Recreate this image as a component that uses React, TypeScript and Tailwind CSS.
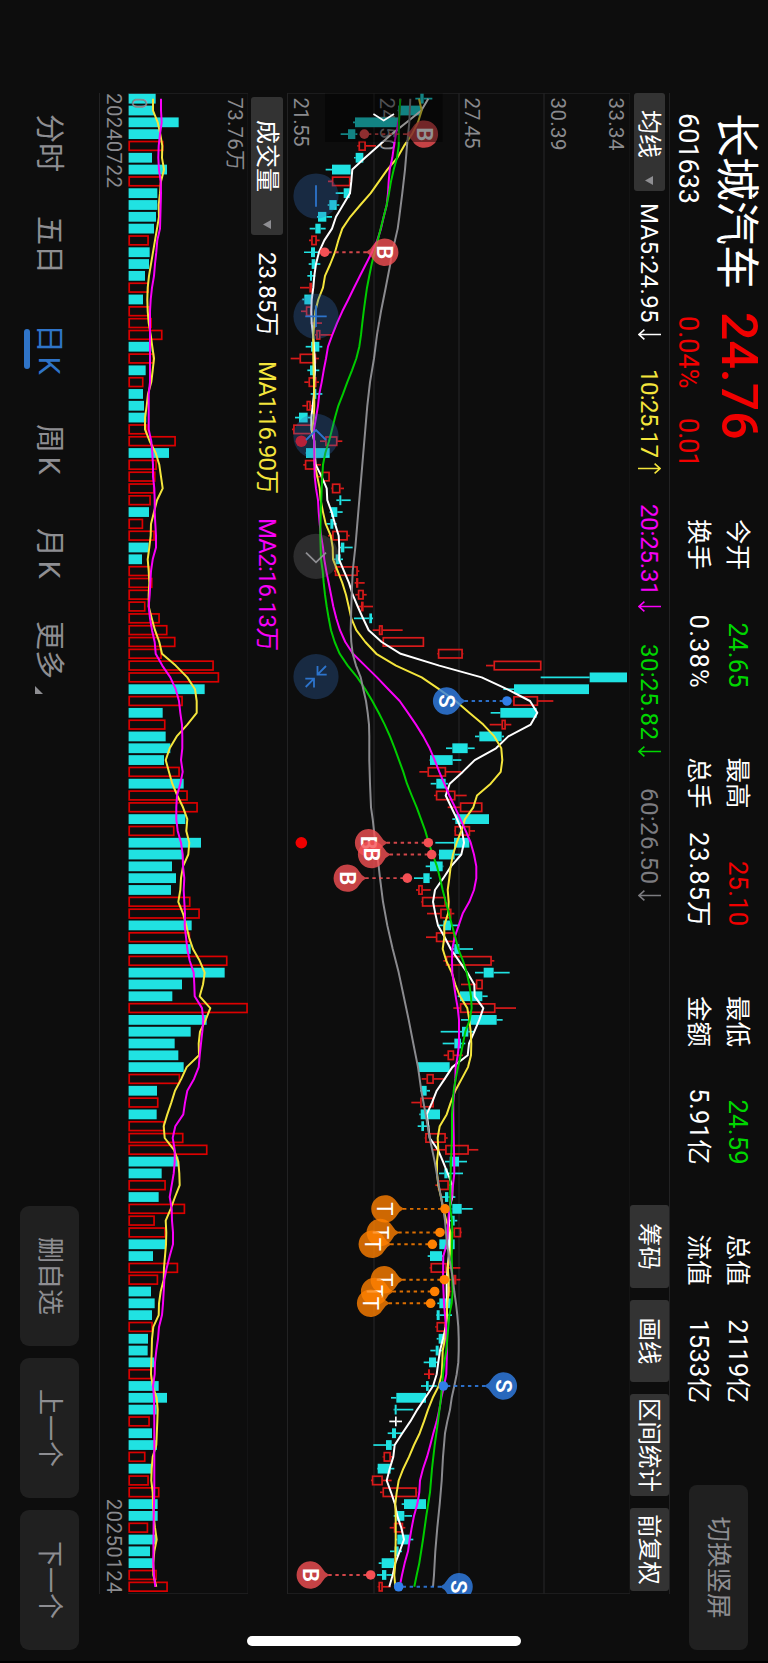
import clsx from "clsx"
import type { ReactNode } from "react"

const CYAN = "#20e2e2"
const RED = "#d81a1a"
const STEP = 11.81

// every plotted level is in thirds of a pixel, measured up from the axis origin
const xAt = (i: number) => 5.7 + i * STEP
const priceY = (v: number) => 350 - v / 3
const volumeY = (v: number) => 248 - v / 3

// kind, low, body bottom, body top, high
const CANDLES = `
c,406,421,431,457 c,353,355,422,422 c,219,225,355,355 c,182,204,226,232 r,232,236,257,288
c,222,227,250,250 c,137,156,212,212 r,144,156,211,211 c,167,191,209,213 c,143,148,170,178
c,111,114,139,156 c,89,106,122,137 r,87,94,110,119 c,72,93,105,115 c,86,95,106,121
c,82,90,96,106 r,60,88,96,96 c,67,73,96,96 r,63,78,94,97 r,92,102,107,126
r,105,109,121,157 c,77,93,118,127 r,32,59,108,117 c,82,90,106,118 r,73,86,109,117
c,92,103,109,127 r,67,80,92,102 c,45,57,83,92 r,36,40,98,98 r,120,136,172,187
c,77,78,149,149 r,70,75,105,123 r,108,124,149,149 r,154,156,181,192 c,169,178,184,212
c,149,153,172,188 c,139,151,160,170 r,144,157,203,209 c,180,183,193,218 c,160,167,182,189
r,162,165,233,238 r,224,228,235,254 r,226,234,251,260 r,234,243,251,279 c,222,268,276,279
r,278,297,308,368 r,306,308,432,432 r,472,474,548,550 r,618,641,784,784 c,782,929,1041,1041
c,670,702,927,927 r,698,700,774,820 c,632,661,770,770 r,629,665,677,694 c,585,598,665,672
c,498,517,563,584 c,449,450,518,544 r,418,443,498,544 c,452,469,497,504 r,462,468,526,560
r,503,540,607,607 c,517,526,627,627 r,522,524,570,585 c,466,522,568,568 c,476,477,524,544
c,437,450,488,490 c,402,430,449,455 r,408,415,428,452 r,424,426,497,497 r,441,481,514,523
c,477,490,513,538 r,438,468,524,524 c,515,523,538,579 r,490,498,635,643 c,585,611,641,689
r,543,588,608,608 c,533,540,607,623 r,520,540,646,708 c,543,570,650,668 c,482,546,565,585
c,488,523,543,556 r,491,503,522,549 c,412,414,509,509 r,425,440,461,497 c,420,424,440,450
r,394,421,461,461 c,418,422,480,480 c,413,424,432,448 r,434,436,497,503 r,459,496,566,595
c,495,509,537,561 c,477,493,503,549 r,466,474,506,510 c,485,495,505,526 c,515,517,545,578
c,508,516,524,532 r,519,521,543,545 c,477,478,524,524 c,443,450,486,490 r,449,452,500,541
r,500,520,529,541 r,498,502,511,514 c,472,478,512,516 c,468,470,479,516 r,466,470,496,500
c,470,476,494,494 c,451,467,476,486 c,431,447,468,476 r,432,444,450,463 c,423,438,446,470
c,333,349,438,438 c,341,344,350,400 w,328,345,350,366 c,323,336,348,368 c,280,318,335,342
r,308,311,332,340 c,291,293,332,343 r,273,276,308,335 r,300,308,410,412 c,365,372,438,438
c,341,350,373,396 r,329,342,369,376 c,346,352,389,400 c,330,344,356,366 c,296,305,342,344
c,291,306,319,336 r,293,296,308,332`

const VOLUMES = `
c467 c462 c536 c478 r490 c456 c501 r483 c472 c472 c468 c462 r446 c449 c447 c435 r446 c429 r450 r455
r487 c454 r462 c437 r430 c429 c432 c439 r442 r527 c507 r470 r466 r463 r452 c447 r429 r464 c446 c426
r450 r457 r448 r436 r479 r502 r526 r485 r641 r657 c614 r548 c488 r496 c497 c511 c492 r539 c551 r563
r593 c556 r523 c603 c548 c516 c528 c513 r571 r599 c575 r570 c572 r682 c674 c546 c517 r743 c620 c572
c524 c535 c551 r540 c471 r475 c470 r493 r550 r622 c535 c485 r497 c476 r555 r464 r497 c498 c459 r534
r474 c453 c464 c456 r458 c444 c443 c462 r455 c476 c501 c470 r449 c456 c471 r436 c454 r446 r478 c473
c473 r444 c468 c450 c458 r470 r503`

// index,level pairs
const MA60 =
  "0,391 2,388 4,381 6,375 8,367 10,358 11,353 12,345 13,336 14,331 16,317 18,303 20,291 22,282 24,270 26,262 28,256 30,250 32,244 34,238 36,232 38,226 40,218 42,215 44,213 45,212 46,214 47,218 48,228 49,242 50,250 51,258 52,263 53,267 54,268 56,268 58,270 60,273 61,278 62,282 63,286 64,291 65,296 66,300 68,309 70,322 72,338 74,356 76,371 78,386 80,400 82,414 84,424 86,437 88,449 90,464 92,476 94,490 95,495 97,501 98,507 99,513 100,519 101,523 102,528 103,532 104,535 105,536 106,536 107,535 108,530 109,523 110,515 111,510 112,502 113,495 115,489 117,485 119,479 121,472 123,466 125,462 126,459"
const MA5 =
  "0,445 1,424 2,380 3,335 4,295 5,255 6,217 7,214 8,210 9,189 10,168 11,156 12,133 13,117 14,108 15,103 16,100 17,95 18,94 19,95 20,99 21,102 22,104 23,105 24,103 25,102 26,98 27,94 28,94 29,103 30,104 31,107 32,125 33,140 34,142 35,155 36,165 37,176 38,178 39,177 40,192 41,207 42,218 43,233 44,249 45,266 46,305 47,362 48,478 49,605 50,681 51,750 52,772 53,752 54,685 55,648 56,584 57,548 58,509 59,497 60,514 61,531 62,546 63,552 64,544 65,513 66,490 67,465 68,459 69,466 70,474 71,494 72,512 73,537 74,562 75,583 76,584 77,610 78,598 79,583 80,567 81,563 82,517 83,494 84,470 85,456 86,440 87,445 88,449 89,474 90,489 91,503 92,517 93,517 94,508 95,507 96,508 97,508 98,506 99,503 100,500 101,500 102,501 103,501 104,497 105,489 106,480 107,475 108,470 109,459 110,436 111,412 112,391 113,367 114,344 115,340 116,329 117,320 118,333 119,345 120,352 121,364 122,372 123,359 124,346 125,338 126,328"
const MA10 =
  "0,417 1,425 2,414 3,396 4,372 5,352 6,322 7,297 8,272 9,241 10,211 11,187 12,175 13,165 14,151 15,135 16,129 17,115 18,106 19,103 20,100 22,100 25,103 26,103 27,101 28,97 29,103 31,104 32,112 33,119 34,122 35,129 36,137 37,152 38,158 39,159 40,173 41,187 42,198 43,206 44,214 45,229 46,256 47,289 48,348 49,425 50,477 51,527 52,568 53,610 54,643 55,664 56,667 57,662 58,632 59,591 60,580 61,555 62,544 63,530 64,519 65,512 66,508 67,503 68,506 69,504 70,493 71,493 72,488 73,499 74,515 75,526 76,540 77,562 78,568 79,572 80,574 81,573 82,564 83,545 84,526 85,512 86,500 87,479 88,473 89,475 90,471 91,471 92,475 93,483 94,490 95,499 96,512 97,514 98,509 99,503 100,506 101,506 102,502 103,500 104,498 105,495 106,488 107,487 108,485 109,476 110,458 111,444 112,432 113,419 114,402 115,387 116,370 117,356 118,350 119,346 120,347 122,347 124,346 125,343 126,346"
const MA20 =
  "0,361 1,359 2,355 3,348 4,342 5,337 6,329 7,326 8,324 9,320 10,311 11,303 12,292 13,276 14,258 15,240 16,222 17,205 18,187 19,171 20,157 21,144 22,138 23,131 24,125 25,118 26,114 27,108 28,102 30,103 32,104 33,108 34,114 35,116 36,119 37,123 38,129 39,133 40,139 41,146 42,153 43,160 44,169 45,180 46,196 47,219 48,255 49,291 50,325 51,359 52,384 53,408 54,430 55,449 56,464 57,478 58,493 59,508 60,525 61,541 62,557 63,572 64,582 65,589 66,589 67,582 68,568 69,548 70,536 71,524 72,517 73,516 74,517 75,522 76,527 77,533 78,537 80,537 81,533 82,527 83,526 84,523 85,520 86,520 89,522 91,523 92,519 93,515 94,508 95,505 96,503 97,500 98,490 100,489 102,492 104,498 106,501 108,499 109,492 110,484 111,478 112,470 113,460 114,451 115,441 116,429 117,420 118,418 119,412 120,402 121,395 122,389 123,384 124,374 125,366 126,359"
const MA30 =
  "0,361 2,357 4,356 5,351 6,341 7,333 8,327 9,320 10,311 11,302 12,293 13,284 14,275 15,268 16,261 17,256 18,251 19,247 20,243 21,238 22,229 23,216 24,202 25,189 26,175 27,165 28,156 29,147 30,136 31,129 32,127 33,125 34,124 35,122 37,121 39,123 40,128 41,131 42,135 43,140 44,146 45,153 46,164 47,179 48,203 49,232 50,256 51,277 52,296 53,314 54,330 55,344 56,357 57,370 58,381 59,395 60,410 61,423 62,436 63,446 64,458 65,471 66,480 67,488 68,497 69,507 70,516 71,526 72,535 73,549 74,560 75,568 76,573 77,575 78,569 79,556 80,549 81,542 82,534 83,527 84,521 86,516 88,516 90,513 92,511 94,511 95,516 96,517 98,515 100,517 101,518 102,515 103,508 104,505 106,499 107,493 108,489 109,486 110,483 112,474 114,464 116,456 118,450 120,439 122,429 124,418 125,410 126,403"
const VOL_MA1 =
  "0,459 1,459 2,473 3,481 4,487 5,486 6,492 7,483 8,480 9,476 10,477 11,471 12,465 13,459 14,453 15,447 16,443 17,442 18,443 19,446 20,452 21,457 22,462 23,458 24,454 25,444 26,440 27,435 28,435 29,449 30,467 31,478 32,483 33,488 34,471 35,462 36,453 37,452 38,448 39,443 40,446 41,448 42,446 43,446 44,455 45,465 46,478 47,486 48,527 49,562 50,585 51,590 52,590 53,562 54,530 55,509 56,497 57,507 58,517 59,532 60,549 61,562 62,559 63,568 64,565 65,549 66,543 67,541 68,535 69,549 70,559 71,567 72,579 73,599 74,614 75,609 76,599 77,631 78,617 79,600 80,596 81,597 82,560 83,544 84,525 85,514 86,502 87,491 88,494 89,522 90,535 91,538 92,539 93,525 94,512 95,497 96,499 97,498 98,495 99,492 100,491 101,482 102,477 103,476 104,460 105,456 106,455 107,454 108,453 109,458 110,470 111,473 112,472 114,469 115,458 116,455 117,454 118,458 119,459 120,461 121,465 122,470 123,463 124,460 125,460 126,469"
const VOL_MA2 =
  "0,483 1,483 2,485 3,480 4,476 5,475 6,477 7,482 8,483 11,480 12,472 13,469 14,465 15,462 16,456 17,452 18,450 20,450 24,450 25,446 26,446 28,446 29,454 30,457 31,459 32,459 33,463 34,464 35,464 36,466 37,468 38,468 39,458 40,453 41,451 42,449 43,446 44,450 45,456 46,464 47,467 48,487 49,511 50,527 51,537 52,541 53,546 54,547 55,547 56,543 57,548 58,541 59,531 60,529 61,529 62,533 63,543 64,548 65,549 66,553 67,551 68,553 69,555 70,554 71,558 72,562 73,569 74,581 75,583 76,584 77,606 78,610 79,607 80,603 81,599 82,596 83,582 84,562 85,555 86,550 87,526 88,518 89,524 90,524 91,521 92,515 93,509 94,515 95,516 96,519 97,519 98,509 99,500 100,493 101,491 102,489 103,486 104,477 105,474 106,469 107,465 108,464 109,459 110,462 112,463 114,463 118,463 120,461 124,460 125,462 126,466"

type Marker = { kind: "B" | "S" | "T"; i: number; badge: number; dot: number }

const MARKERS: Marker[] = [
  { kind: "B", i: 3, badge: 433, dot: 253 },
  { kind: "B", i: 13, badge: 314, dot: 134 },
  { kind: "S", i: 51, badge: 500, dot: 681 },
  { kind: "B", i: 63, badge: 266, dot: 445 },
  { kind: "B", i: 64, badge: 275, dot: 455 },
  { kind: "B", i: 66, badge: 202, dot: 382 },
  { kind: "T", i: 94, badge: 315, dot: 495 },
  { kind: "T", i: 96, badge: 301, dot: 480 },
  { kind: "T", i: 97, badge: 277, dot: 457 },
  { kind: "T", i: 100, badge: 313, dot: 493 },
  { kind: "T", i: 101, badge: 284, dot: 464 },
  { kind: "T", i: 102, badge: 272, dot: 452 },
  { kind: "S", i: 109, badge: 670, dot: 490 },
  { kind: "B", i: 125, badge: 91, dot: 272 },
  { kind: "S", i: 126, badge: 537, dot: 356 },
]

const MARKER_COLOR = { B: "#f45054", S: "#317fe8", T: "#ff8000" }

const STATS = [
  ["今开", "24.65", "text-[#00d600]", "换手", "0.38%", "tracking-[1.2px] -mr-[1px]"],
  ["最高", "25.10", "text-[#f00000]", "总手", "23.85万", "tracking-[1px] -mr-[1px]"],
  ["最低", "24.59", "text-[#00d600]", "金额", "5.91亿", "tracking-[0.3px]"],
  ["总值", "2119亿", "text-white", "流值", "1533亿", "tracking-[0.3px]"],
]

const AVERAGES = [
  { text: "MA5:24.95", up: false, cls: "w-[166px] text-white tracking-[0.4px]" },
  { text: "10:25.17", up: true, cls: "w-[135px] text-[#f4e53c] tracking-[-0.6px]" },
  { text: "20:25.31", up: false, cls: "w-[140px] text-[#f800f8] tracking-[-0.2px]" },
  { text: "30:25.82", up: false, cls: "w-[144px] text-[#00d600] tracking-[0.4px]" },
  { text: "60:26.50", up: false, cls: "w-[144px] text-[#7c7c80] tracking-[0.4px]" },
]

const TOOLS = [
  { text: "筹码", cls: "w-[83px]" },
  { text: "画线", cls: "w-[82px]" },
  { text: "区间统计", cls: "w-[102px]" },
  { text: "前复权", cls: "w-[83px]" },
]

const PERIODS = [
  { text: "分时", cls: "w-[102px]" },
  { text: "五日", cls: "w-[108px]" },
  { text: "日K", cls: "w-[100px] tracking-[3.5px]", active: true },
  { text: "周K", cls: "w-[104px] tracking-[3.5px]" },
  { text: "月K", cls: "w-[93px] tracking-[3.5px]" },
]

function Line({ data, y, color }: { data: string; y: (v: number) => number; color: string }) {
  const points = data
    .split(" ")
    .map((p) => {
      const [i, v] = p.split(",").map(Number)
      return `${xAt(i).toFixed(1)},${y(v).toFixed(1)}`
    })
    .join(" ")
  return <polyline points={points} fill="none" stroke={color} strokeWidth={2} strokeLinejoin="round" />
}

function Candle({ row, i }: { row: string; i: number }) {
  const [kind, ...levels] = row.split(",")
  const [low, bottom, top, high] = levels.map((v) => priceY(Number(v)))
  const x = xAt(i)
  const color = kind === "c" ? CYAN : kind === "r" ? RED : "#ffffff"
  const hollow = kind === "r" && bottom - top > 3

  return (
    <g stroke={color} strokeWidth={1.7}>
      <line x1={x} x2={x} y1={high} y2={top} />
      <line x1={x} x2={x} y1={bottom} y2={low} />
      {hollow ? (
        <rect x={x - 4.2} width={8.4} y={top + 0.6} height={bottom - top - 1.2} fill="none" />
      ) : (
        <rect x={x - 4.9} width={9.8} y={top} height={Math.max(bottom - top, 1.5)} fill={color} stroke="none" />
      )}
    </g>
  )
}

function TradeMarker({ kind, i, badge, dot }: Marker) {
  const x = xAt(i)
  const cy = priceY(badge)
  const dy = priceY(dot)
  const dir = dy > cy ? 1 : -1
  const color = MARKER_COLOR[kind]

  return (
    <g>
      <line
        x1={x}
        x2={x}
        y1={cy + dir * 18}
        y2={dy}
        stroke={color}
        strokeWidth={1.9}
        strokeDasharray="3.4 3.6"
        opacity={0.85}
      />
      <path
        d={`M${x - 7} ${cy + dir * 11.7} A13.7 13.7 0 1 ${dir > 0 ? 1 : 0} ${x + 7} ${cy + dir * 11.7} Q${x + 2.5} ${cy + dir * 14} ${x} ${cy + dir * 19} Q${x - 2.5} ${cy + dir * 14} ${x - 7} ${cy + dir * 11.7}Z`}
        fill={color}
        opacity={0.8}
      />
      <text
        x={x}
        y={cy + 7.8}
        fontSize={22}
        fontWeight={kind === "T" ? 400 : 600}
        textAnchor="middle"
        fill="#ffffff"
      >
        {kind}
      </text>
      <circle cx={x} cy={dy} r={4.8} fill={color} />
    </g>
  )
}

function RoundButton({ x, gray, children }: { x: number; gray?: boolean; children: ReactNode }) {
  return (
    <g transform={`translate(${x} 314)`} fill="none" strokeWidth={1.8} stroke={gray ? "#8e8e92" : "#2d74cc"}>
      <circle r={22.6} stroke="none" fill={gray ? "#747478" : "#326ebe"} fillOpacity={0.3} />
      {children}
    </g>
  )
}

function PriceChart() {
  return (
    <svg className="block h-[343px] w-[1501px]" viewBox="0 0 1501 343">
      <g stroke="#222223" strokeWidth={1.4} fill="none">
        <path d="M0 -1V343M1501 -1V343" />
        {[22, 282, 537, 792, 1051].map((v) => (
          <line key={v} x1={0} x2={1501} y1={priceY(v)} y2={priceY(v)} />
        ))}
      </g>

      <g fill="#8a8a8e" fontSize={20.5}>
        <text x={4.5} y={21.5} textLength={53}>33.34</text>
        <text x={4.5} y={79.5} textLength={53}>30.39</text>
        <text x={4.5} y={165} textLength={51}>27.45</text>
        <text x={4.5} y={250.5} textLength={53}>24.50</text>
        <text x={4.5} y={336} textLength={49}>21.55</text>
      </g>

      {CANDLES.trim().split(/\s+/).map((row, i) => (
        <Candle key={i} row={row} i={i} />
      ))}

      <circle cx={xAt(29)} cy={priceY(64)} r={5.8} fill="#f00000" />
      <circle cx={xAt(63)} cy={priceY(64)} r={5.8} fill="#f00000" />

      <Line data={MA5} y={priceY} color="#ffffff" />
      <Line data={MA10} y={priceY} color="#f4e53c" />
      <Line data={MA20} y={priceY} color="#f800f8" />
      <Line data={MA30} y={priceY} color="#00cc00" />
      <Line data={MA60} y={priceY} color="#8a8a8e" />

      {MARKERS.map((m) => (
        <TradeMarker key={m.i} {...m} />
      ))}

      {/* drawer handle */}
      <rect x={0.5} y={187.3} width={48.5} height={117.7} fill="#000000" fillOpacity={0.42} />
      <path d="M21 236l6.5 10.3l-6.5 10.3" fill="none" stroke="#ffffff" strokeWidth={1.6} />

      <RoundButton x={103}>
        <path d="M-10.7 0H10.7" />
      </RoundButton>
      <RoundButton x={223.3}>
        <path d="M-10.7 0H10.7M0 -10.7V10.7" />
      </RoundButton>
      <RoundButton x={343.3}>
        <path d="M3.7 -10L-6.3 0L3.7 10" />
      </RoundButton>
      <RoundButton x={463.3} gray>
        <path d="M-3.7 -10L6 0L-3.7 10" />
      </RoundButton>
      <RoundButton x={583.7}>
        <path d="M-10.7 -1.5H-2V-10.7M-2 -1.5L-10.7 -10M10.7 2H2V10.7M2 2L10.3 10.3" />
      </RoundButton>
    </svg>
  )
}

function VolumeChart() {
  return (
    <svg className="block h-[120px] w-[1501px]" viewBox="0 0 1501 120">
      <path d="M0 120V-0.3H1501V120" stroke="#222223" strokeWidth={1.4} fill="none" />
      {VOLUMES.trim().split(/\s+/).map((bar, i) => {
        const top = volumeY(Number(bar.slice(1)))
        const x = xAt(i)
        return bar[0] === "c" ? (
          <rect key={i} x={x - 4.9} y={top} width={9.8} height={119.4 - top} fill={CYAN} />
        ) : (
          <rect
            key={i}
            x={x - 4.4}
            y={top + 0.6}
            width={8.8}
            height={118.2 - top}
            fill="none"
            stroke="#dc0000"
            strokeWidth={1.7}
          />
        )
      })}
      <g fill="#8a8a8e" fontSize={20.5}>
        <text x={4.5} y={20} textLength={73}>73.76万</text>
        <text x={4.5} y={116}>0</text>
      </g>
      <Line data={VOL_MA1} y={volumeY} color="#f4e53c" />
      <Line data={VOL_MA2} y={volumeY} color="#f800f8" />
    </svg>
  )
}

function Caret() {
  return (
    <svg className="h-2 w-[9px]" viewBox="0 0 9 8">
      <path d="M0 0H9L4.5 8Z" fill="#8e8e92" />
    </svg>
  )
}

function TrendArrow({ up }: { up: boolean }) {
  return (
    <svg
      className={clsx("h-[23px] w-[11px]", up && "rotate-180")}
      viewBox="0 0 11 23"
      fill="none"
      stroke="currentColor"
      strokeWidth={1.6}
    >
      <path d="M5.5 0V22M0.7 16.6L5.5 22L10.3 16.6" />
    </svg>
  )
}

function Header() {
  return (
    <header className="flex h-[98px] shrink-0 pl-[113px]">
      <div className="w-[199px] pt-[10px]">
        <h1 className="h-[44px] text-[44px] leading-[44px] text-white">长城汽车</h1>
        <p className="mt-[13px] h-[27px] text-[27px] leading-[27px] text-white">601633</p>
      </div>
      <div className="w-[207px] pt-[7px] text-[#f00000]">
        <p className="h-[44px] text-[50px] leading-[44px] font-medium">24.76</p>
        <p className="mt-[16px] flex h-[27px] pl-1 text-[27px] leading-[27px]">
          <span className="w-[102px]">0.04%</span>
          <span className="tracking-[-1px]">0.01</span>
        </p>
      </div>
      <div className="flex w-[966px] gap-[69.5px] pt-[17px] text-[25.5px] leading-[26px] text-white">
        {STATS.map(([label, value, color, label2, value2, spacing]) => (
          <dl key={label} className="w-[169px] space-y-[13px]">
            <div className="flex h-[26px] justify-between">
              <dt>{label}</dt>
              <dd className={clsx("tracking-[0.3px]", color)}>{value}</dd>
            </div>
            <div className="flex h-[26px] justify-between">
              <dt>{label2}</dt>
              <dd className={spacing}>{value2}</dd>
            </div>
          </dl>
        ))}
      </div>
      <button
        type="button"
        className="mt-5 h-[59px] w-[165px] rounded-lg bg-[#202020] text-[25.5px] text-[#8e8e92]"
      >
        切换竖屏
      </button>
    </header>
  )
}

function AverageBar() {
  return (
    <div className="ml-[93px] flex h-10 w-[1501px] shrink-0 items-center border-t border-[#222223] text-[24px] leading-6">
      <button
        type="button"
        className="flex h-[31px] w-[98px] items-center justify-between rounded-[3px] bg-[#333333] pr-1.5 pl-[17px] text-white"
      >
        均线
        <Caret />
      </button>
      <div className="ml-[12px] flex">
        {AVERAGES.map((a) => (
          <span key={a.text} className={clsx("flex items-center gap-[6px]", a.cls)}>
            {a.text}
            <TrendArrow up={a.up} />
          </span>
        ))}
      </div>
      <div className="mr-[3px] ml-auto flex h-full gap-[12px]">
        {TOOLS.map((t) => (
          <button
            key={t.text}
            type="button"
            className={clsx("h-full rounded-[3px] bg-[#333333] text-[23.5px] text-white", t.cls)}
          >
            {t.text}
          </button>
        ))}
      </div>
    </div>
  )
}

function VolumeBar() {
  return (
    <div className="ml-[97px] flex h-[39px] shrink-0 items-center text-[24px] leading-6">
      <button
        type="button"
        className="flex h-8 w-[138px] items-center justify-between rounded-[3px] bg-[#333333] pr-1.5 pl-[23px] text-white"
      >
        成交量
        <Caret />
      </button>
      <span className="ml-[17px] w-[109px] text-white">23.85万</span>
      <span className="w-[157px] tracking-[-0.8px] text-[#f4e53c]">MA1:16.90万</span>
      <span className="tracking-[-0.8px] text-[#f800f8]">MA2:16.13万</span>
    </div>
  )
}

function Footer() {
  return (
    <footer className="flex h-[99px] shrink-0 justify-between pr-[11px] pl-[114px] text-[#8e8e92]">
      <nav className="flex h-full items-center pt-[3px] text-[29px]">
        {PERIODS.map((p) => (
          <button
            key={p.text}
            type="button"
            className={clsx("relative text-left", p.cls, p.active && "text-[#2f74c8]")}
          >
            {p.text}
            {p.active && (
              <span className="absolute -bottom-[2px] left-[5px] h-[6px] w-10 rounded-full bg-[#2f74c8]" />
            )}
          </button>
        ))}
        <button type="button" className="flex items-end">
          更多
          <svg className="mb-[9px] ml-[7px] size-2" viewBox="0 0 8 8">
            <path d="M8 0V8H0Z" fill="currentColor" />
          </svg>
        </button>
      </nav>
      <div className="flex gap-[12px] pt-5">
        {["删自选", "上一个", "下一个"].map((label) => (
          <button
            key={label}
            type="button"
            className="h-[59px] w-[140px] rounded-[9px] bg-[#202020] text-[26px]"
          >
            {label}
          </button>
        ))}
      </div>
    </footer>
  )
}

export default function App() {
  return (
    <div className="h-[1663px] w-[768px] overflow-hidden bg-[#0d0d0d]">
      <main className="relative flex h-[768px] w-[1663px] origin-top-left translate-x-[768px] rotate-90 flex-col border-r-2 border-black bg-[#0d0d0d] font-['Roboto','Noto_Sans_CJK_SC',sans-serif] whitespace-nowrap">
        <Header />
        <AverageBar />
        <div className="ml-[93px] h-[343px] shrink-0">
          <PriceChart />
        </div>
        <VolumeBar />
        <div className="ml-[93px] h-[120px] shrink-0">
          <VolumeChart />
        </div>
        <div className="ml-[93px] flex h-[29px] w-[1501px] shrink-0 items-center justify-between border-b border-[#222223] text-[20.5px] leading-none tracking-[0.4px] text-[#8a8a8e]">
          <span>20240722</span>
          <span>20250124</span>
        </div>
        <Footer />
        {/* home indicator */}
        <span className="absolute top-[247px] right-[15px] h-[274px] w-[10px] rounded-full bg-white" />
      </main>
    </div>
  )
}
